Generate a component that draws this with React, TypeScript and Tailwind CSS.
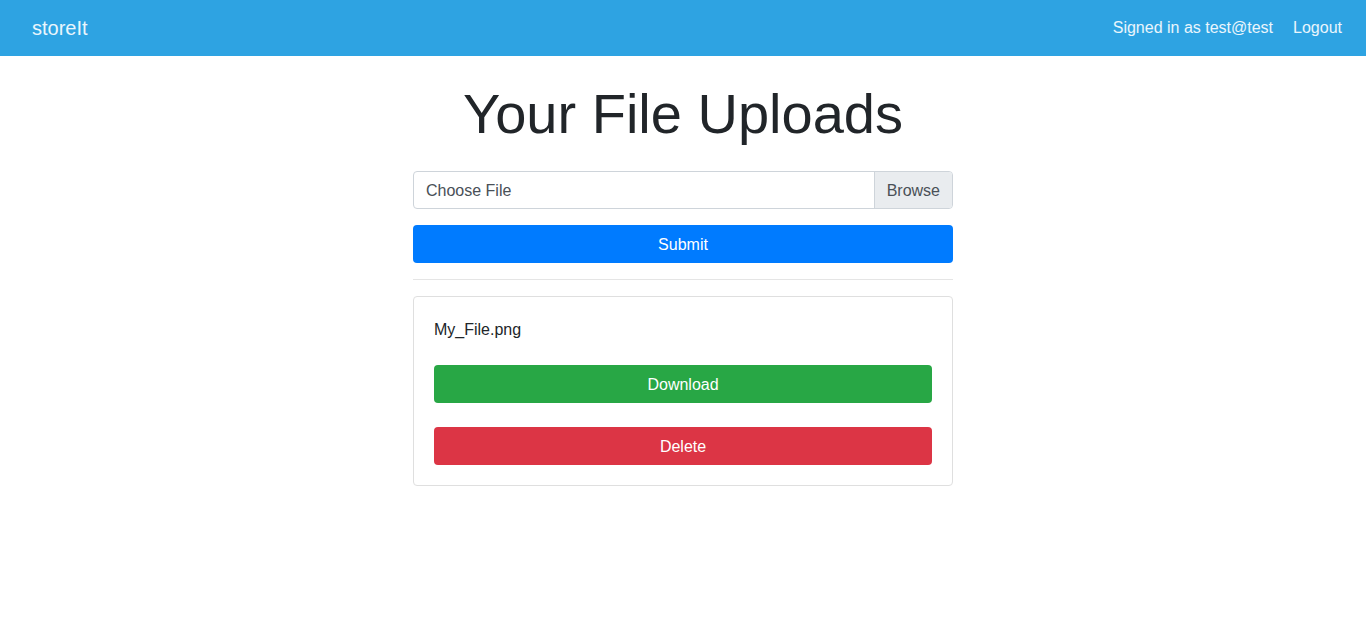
export default function App() {
  return (
    <div className="min-h-screen bg-white text-[#212529] font-['Liberation_Sans',Arial,sans-serif] text-base">
      <nav className="h-14 bg-[#2ea3e2] flex items-center justify-between pl-8 pr-6">
        <span className="text-[20px] text-white/90 leading-[30px]">storeIt</span>
        <div className="flex items-center gap-5 text-white/90 text-base">
          <span>Signed in as test@test</span>
          <span>Logout</span>
        </div>
      </nav>
      <main className="w-[540px] mx-auto">
        <h1 className="text-[56px] leading-[1.2] text-center mt-6 mb-6 font-normal">Your File Uploads</h1>
        <div className="flex h-[38px] border border-[#ced4da] rounded-[4px] overflow-hidden">
          <div className="flex-1 flex items-center px-3 pt-[2px] text-[#495057]">Choose File</div>
          <div className="flex items-center px-3 pt-[2px] bg-[#e9ecef] border-l border-[#ced4da] text-[#495057]">Browse</div>
        </div>
        <button className="mt-4 w-full h-[38px] pt-[2px] bg-[#007bff] text-white rounded-[4px] flex items-center justify-center">
          Submit
        </button>
        <hr className="mt-4 mb-4 border-0 border-t border-[#e5e5e5]" />
        <div className="border border-[#dfdfdf] rounded-[4px] p-5">
          <p className="leading-6 pt-px -mb-px">My_File.png</p>
          <button className="mt-6 w-full h-[38px] pt-[2px] bg-[#28a745] text-white rounded-[4px] flex items-center justify-center">
            Download
          </button>
          <button className="mt-6 w-full h-[38px] pt-[2px] bg-[#dc3545] text-white rounded-[4px] flex items-center justify-center">
            Delete
          </button>
        </div>
      </main>
    </div>
  );
}
